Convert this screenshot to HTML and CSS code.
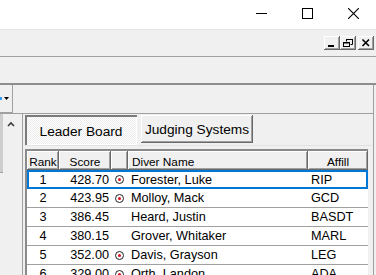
FILE: index.html
```html
<!DOCTYPE html>
<html lang="en">
<head>
    <meta charset="UTF-8">
    <meta name="viewport" content="width=device-width, initial-scale=1.0">
    <title>Leader Board</title>
    <link rel="stylesheet" href="styles.css">
</head>
<body>
    <div class="caption">
        <span class="cap-btn"><svg width="11" height="11" viewBox="0 0 11 11"><path d="M0 5.5H11" stroke="#000"/></svg></span>
        <span class="cap-btn"><svg width="11" height="11" viewBox="0 0 11 11"><rect x="0.5" y="0.5" width="10" height="10" fill="none" stroke="#000"/></svg></span>
        <span class="cap-btn"><svg width="11" height="11" viewBox="0 0 11 11"><path d="M0 0L11 11M11 0L0 11" stroke="#000" stroke-width="1.1"/></svg></span>
    </div>

    <div class="menubar">
        <div class="mdi-buttons">
            <span class="mdi-btn"><svg width="16" height="14" viewBox="0 0 16 14"><rect x="4" y="9" width="6" height="2" fill="#000"/></svg></span>
            <span class="mdi-btn"><svg width="16" height="14" viewBox="0 0 16 14"><path d="M6.5 3.5h6v5h-2M6.5 3.5v2" fill="none" stroke="#000"/><rect x="6" y="3" width="7" height="1" fill="#000"/><rect x="3.5" y="6.5" width="6" height="4" fill="none" stroke="#000"/><rect x="3" y="6" width="7" height="1.5" fill="#000"/></svg></span>
            <span class="mdi-btn gap"><svg width="16" height="14" viewBox="0 0 16 14"><path d="M4.5 3.5L11 10M11 3.5L4.5 10" stroke="#000" stroke-width="1.6"/></svg></span>
        </div>
    </div>

    <div class="toolbar"></div>

    <div class="workspace">
        <div class="combo-row">
            <div class="combo">
                <span class="combo-icon"></span>
                <svg width="5" height="4" viewBox="0 0 5 4"><path d="M0 0H5L2.5 3Z" fill="#000"/></svg>
            </div>
        </div>

        <div class="lower">
            <div class="side">
                <div class="side-thumb"></div>
                <svg class="side-arrow" width="8" height="6" viewBox="0 0 8 6"><path d="M1 5L4 2L7 5" fill="none" stroke="#3c3c3c" stroke-width="1.6"/></svg>
            </div>

            <div class="panel">
                <div class="tabs">
                    <div class="tab active">Leader Board</div>
                    <div class="tab">Judging Systems</div>
                </div>

                <div class="grid">
                    <div class="row head">
                        <div class="cell c-rank">Rank</div>
                        <div class="cell c-score">Score</div>
                        <div class="cell c-mark"></div>
                        <div class="cell c-name">Diver Name</div>
                        <div class="cell c-club">Affill</div>
                    </div>
                    <div class="row selected">
                        <div class="cell c-rank">1</div>
                        <div class="cell c-score">428.70</div>
                        <div class="cell c-mark"><span class="target"></span></div>
                        <div class="cell c-name">Forester, Luke</div>
                        <div class="cell c-club">RIP</div>
                    </div>
                    <div class="row">
                        <div class="cell c-rank">2</div>
                        <div class="cell c-score">423.95</div>
                        <div class="cell c-mark"><span class="target"></span></div>
                        <div class="cell c-name">Molloy, Mack</div>
                        <div class="cell c-club">GCD</div>
                    </div>
                    <div class="row">
                        <div class="cell c-rank">3</div>
                        <div class="cell c-score">386.45</div>
                        <div class="cell c-mark"></div>
                        <div class="cell c-name">Heard, Justin</div>
                        <div class="cell c-club">BASDT</div>
                    </div>
                    <div class="row">
                        <div class="cell c-rank">4</div>
                        <div class="cell c-score">380.15</div>
                        <div class="cell c-mark"></div>
                        <div class="cell c-name">Grover, Whitaker</div>
                        <div class="cell c-club">MARL</div>
                    </div>
                    <div class="row">
                        <div class="cell c-rank">5</div>
                        <div class="cell c-score">352.00</div>
                        <div class="cell c-mark"><span class="target"></span></div>
                        <div class="cell c-name">Davis, Grayson</div>
                        <div class="cell c-club">LEG</div>
                    </div>
                    <div class="row">
                        <div class="cell c-rank">6</div>
                        <div class="cell c-score">329.00</div>
                        <div class="cell c-mark"><span class="target"></span></div>
                        <div class="cell c-name">Orth, Landon</div>
                        <div class="cell c-club">ADA</div>
                    </div>
                </div>
            </div>
        </div>
    </div>
</body>
</html>
```

FILE: styles.css
```css
:root {
    --face: #f0f0f0; --edge: #a0a0a0; --shadow: #696969; --light: #ffffff;
    --select: #0078d7; --text: #000000;
}
html, body { margin: 0; }
body { width: 376px; height: 275px; overflow: hidden; background: var(--face); color: var(--text); font-family: "Liberation Sans", Arial, sans-serif; font-size: 12.7px; }

.caption { height: 29px; background: #fff; border-bottom: 1px solid #e6e6e6; display: flex; justify-content: flex-end; }
.cap-btn { width: 46px; display: flex; justify-content: center; padding-top: 8px; box-sizing: border-box; }
.cap-btn svg { display: block; }

.menubar { height: 26px; border-bottom: 1px solid var(--edge); display: flex; justify-content: flex-end; }
.mdi-buttons { display: flex; padding-top: 6px; padding-right: 2px; }
.mdi-btn { width: 16px; height: 14px; background: var(--face); box-shadow: inset -1px -1px 0 var(--shadow), inset 1px 1px 0 var(--light), inset -2px -2px 0 var(--edge); }
.mdi-btn svg { display: block; }
.mdi-btn.gap { margin-left: 2px; }

.toolbar { height: 26px; border-bottom: 2px solid #8e8e8e; }

.workspace { height: 190px; margin-right: 2px; border-right: 1px solid var(--edge); display: flex; flex-direction: column; }
.combo-row { height: 28px; display: flex; }
.combo { width: 12px; height: 27px; border-right: 1px solid var(--edge); border-bottom: 1px solid var(--edge); display: flex; align-items: center; }
.combo-icon { width: 2px; height: 3px; background: #3399ff; margin-right: 2px; }
.combo svg { display: block; }

.lower { flex: 1; display: flex; min-height: 0; }
.side { width: 22px; position: relative; border-top: 1px solid var(--edge); }
.side-thumb { width: 3px; height: 58px; background: #cdcdcd; border-bottom: 1px solid var(--edge); }
.side-arrow { position: absolute; left: 7px; top: 7px; }

.panel { flex: 1; border-left: 1px solid var(--edge); border-top: 1px solid var(--edge); padding-left: 2px; padding-top: 1px; display: flex; flex-direction: column; }
.tabs { display: flex; gap: 4px; height: 31px; border-bottom: 1px solid #e3e3e3; }
.tab { width: 112px; height: 28px; box-sizing: border-box; display: flex; align-items: center; justify-content: center; font-size: 13.7px; box-shadow: inset -1px -1px 0 var(--shadow), inset 1px 1px 0 var(--light), inset -2px -2px 0 var(--edge); }
.tab.active { height: 30px; background: repeating-conic-gradient(#ffffff 0 25%, #ececec 0 50%) 0 0 / 2px 2px; box-shadow: inset 2px 2px 0 #7a7a7a, inset -1px -1px 0 var(--light); padding-top: 2px; }

.grid { margin-top: 3px; width: 343px; border-top: 2px solid #8a8a8a; border-left: 2px solid #8a8a8a; box-sizing: border-box; background: #fff; }
.row { display: grid; grid-template-columns: 32px 52px 17px 180px 60px; height: 19px; border-bottom: 1px solid var(--edge); box-sizing: border-box; }
.row.head { height: 19px; border-bottom: 0; background: var(--face); font-size: 11.8px; }
.row.head .cell { justify-content: center; padding: 2px 0 0; box-shadow: inset -1px -1px 0 var(--shadow), inset 1px 1px 0 var(--light), inset -2px -2px 0 var(--edge); }
.row.head .c-name { justify-content: flex-start; padding-left: 4px; }
.row.selected { box-shadow: inset 0 0 0 2px var(--select); border-bottom: 0; height: 19px; }
.cell { display: flex; align-items: center; white-space: nowrap; overflow: hidden; }
.c-rank { justify-content: center; }
.c-score { justify-content: flex-end; padding-right: 2px; }
.c-mark { justify-content: center; }
.c-name { padding-left: 3px; }
.c-club { padding-left: 3px; }
.target { width: 7px; height: 7px; border: 1px solid #222; border-radius: 50%; display: flex; align-items: center; justify-content: center; }
.target::after { content: ""; width: 3px; height: 3px; border-radius: 50%; background: #e01020; }
```
